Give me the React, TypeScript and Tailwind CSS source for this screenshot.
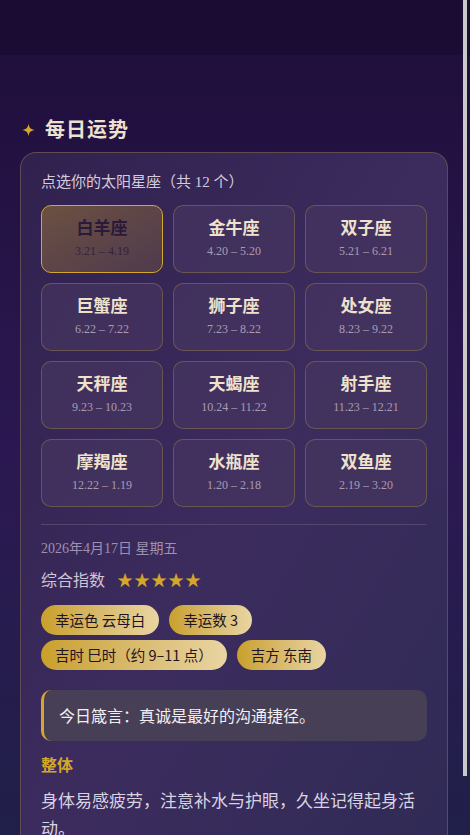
import React, { useState } from 'react';

const signs = [
  { name: '白羊座', range: '3.21 – 4.19' },
  { name: '金牛座', range: '4.20 – 5.20' },
  { name: '双子座', range: '5.21 – 6.21' },
  { name: '巨蟹座', range: '6.22 – 7.22' },
  { name: '狮子座', range: '7.23 – 8.22' },
  { name: '处女座', range: '8.23 – 9.22' },
  { name: '天秤座', range: '9.23 – 10.23' },
  { name: '天蝎座', range: '10.24 – 11.22' },
  { name: '射手座', range: '11.23 – 12.21' },
  { name: '摩羯座', range: '12.22 – 1.19' },
  { name: '水瓶座', range: '1.20 – 2.18' },
  { name: '双鱼座', range: '2.19 – 3.20' },
];

const chips = ['幸运色 云母白', '幸运数 3', '吉时 巳时（约 9–11 点）', '吉方 东南'];

const serif = { fontFamily: '"Liberation Serif", "Noto Sans CJK SC", serif' };
const sans = { fontFamily: '"Noto Sans CJK SC", "Noto Sans", sans-serif' };

const App: React.FC = () => {
  const [selected, setSelected] = useState(0);

  return (
    <div
      className="relative min-h-screen bg-gradient-to-b from-[#1e0e39] via-[#2b1852] to-[#1e2148]"
      style={serif}
    >
      {/* Top bar */}
      <div className="h-[55px] bg-[#1b0c33]" />

      {/* Scroll indicator overlay */}
      <div className="pointer-events-none fixed top-0 right-[3px] w-[4px] h-[776px] bg-[#c9c9c9]" />

      <main className="pl-5 pr-[22px] pt-[60px] pb-10">
        {/* Heading */}
        <div className="flex items-center gap-[10px] mb-[7px] pl-[2px]">
          <svg width="13" height="14" viewBox="0 0 24 24" className="text-[#d4a62a]">
            <path d="M12 0 C13 8 16 11 24 12 C16 13 13 16 12 24 C11 16 8 13 0 12 C8 11 11 8 12 0 Z" fill="currentColor" />
          </svg>
          <h2 className="text-[20px] font-bold text-[#ede2cf] tracking-[1px]">每日运势</h2>
        </div>

        {/* Card */}
        <section className="rounded-2xl border border-[#6a5550]/80 bg-gradient-to-br from-[#31214f] via-[#3c2c5e] to-[#2f2b55] px-5 pt-[18px] pb-5">
          <p className="text-[15px] text-[#d6cbdc] mb-[11px]">点选你的太阳星座（共 12 个）</p>

          <div className="grid grid-cols-3 gap-x-[10px] gap-y-[10px]">
            {signs.map((s, i) => {
              const active = i === selected;
              return (
                <button
                  key={s.name}
                  onClick={() => setSelected(i)}
                  className={`h-[68px] rounded-[10px] border flex flex-col items-center justify-center ${
                    active
                      ? 'border-[#d4a62a] bg-gradient-to-br from-[#6c5040] to-[#4f3a4d]'
                      : 'border-[#75604f]/80 bg-[#46345f]/70'
                  }`}
                >
                  <span className={`text-[17px] font-bold leading-[22px] ${active ? 'text-[#2a1938]' : 'text-[#eee2cc]'}`}>
                    {s.name}
                  </span>
                  <span className={`text-[12px] leading-[16px] mt-[3px] ${active ? 'text-[#33233f]' : 'text-[#a99cb2]'}`}>
                    {s.range}
                  </span>
                </button>
              );
            })}
          </div>

          <div className="h-px bg-[#54466f] mt-[17px] mb-[13px]" />

          <p className="text-[14px] text-[#9e91af] mb-[10px]">2026年4月17日 星期五</p>

          <div className="flex items-center gap-[12px] mb-[12px]">
            <span className="text-[16px] text-[#cfc5d8]">综合指数</span>
            <span className="text-[16px] text-[#d4a62a] tracking-[1px]">★★★★★</span>
          </div>

          <div className="flex flex-wrap gap-x-[10px] gap-y-[5px]" style={sans}>
            {chips.map((c) => (
              <span
                key={c}
                className="h-[30px] px-[14px] flex items-center rounded-full bg-gradient-to-r from-[#c9a028] to-[#e9d5a2] text-[14.5px] text-[#1f1420]"
              >
                {c}
              </span>
            ))}
          </div>

          <div
            className="mt-[20px] rounded-[10px] border-l-[3px] border-[#d4a62a] bg-[#463f56] h-[51px] flex items-center pl-[15px]"
            style={sans}
          >
            <span className="text-[16px] text-[#f2eef2]">今日箴言：真诚是最好的沟通捷径。</span>
          </div>

          <h3 className="mt-[13px] text-[16px] font-bold text-[#d4a62a]">整体</h3>
          <p className="mt-[8px] text-[17px] leading-[28px] text-[#d9d3e1]" style={sans}>
            身体易感疲劳，注意补水与护眼，久坐记得起身活动。
          </p>
        </section>
      </main>
    </div>
  );
};

export default App;
